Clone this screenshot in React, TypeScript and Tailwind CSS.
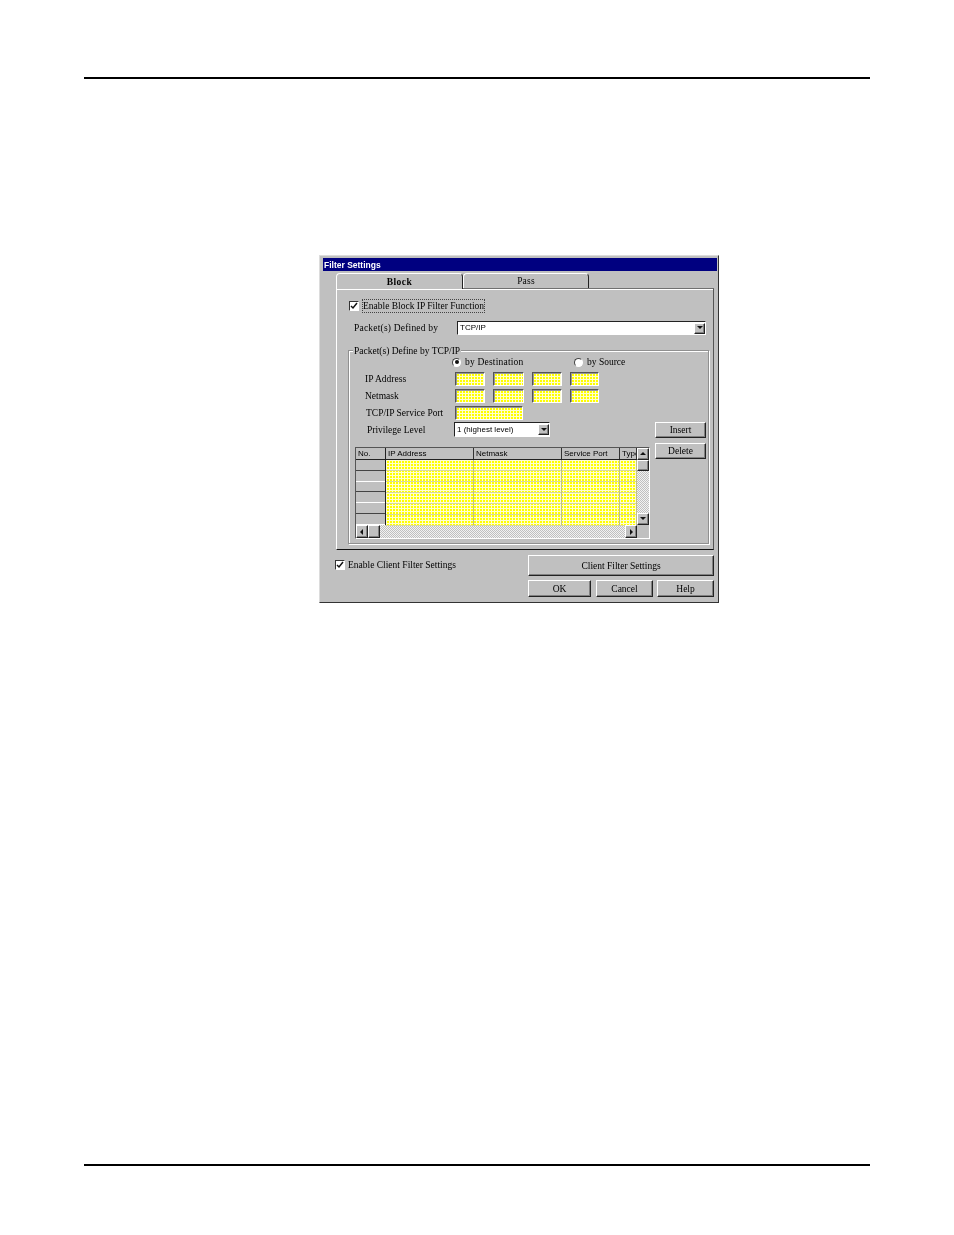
import type { ReactNode } from "react";

const serif = "font-['Liberation_Serif',serif] text-[9.5px] leading-[12px] text-black whitespace-nowrap";
const sans = "font-['Liberation_Sans',sans-serif] text-[8px] leading-[12px] text-black whitespace-nowrap";
const raised = "border border-t-white border-l-white border-r-[#222] border-b-[#222] bg-[#c0c0c0] shadow-[inset_-1px_-1px_0_#808080]";
const sunken = "border border-t-[#555] border-l-[#555] border-r-white border-b-white";
const yellow = "bg-[#ffff00] bg-[linear-gradient(90deg,#fffed0_1px,transparent_1px),linear-gradient(#fffed0_1px,transparent_1px)] bg-[size:3px_3px]";
const hatch = "bg-[repeating-conic-gradient(#c0c0c0_0_25%,#f2f2f2_0_50%)] bg-[size:2px_2px]";

const Arrow = ({ dir }: { dir: "up" | "down" | "left" | "right" }) => {
  const points = { up: "1,5 7,5 4,2", down: "1,2 7,2 4,5", left: "5,1 5,7 2,4", right: "3,1 3,7 6,4" }[dir];
  return (
    <svg width="8" height="8" viewBox="0 0 8 8">
      <polygon points={points} fill="#111" />
    </svg>
  );
};

const Check = () => (
  <span className="flex h-[10px] w-[10px] shrink-0 items-center justify-center border border-t-[#333] border-l-[#333] border-r-white border-b-white bg-white">
    <svg width="8" height="8" viewBox="0 0 8 8">
      <path d="M1 4 L3 6 L7 1" fill="none" stroke="#111" strokeWidth="1.5" />
    </svg>
  </span>
);

const Radio = ({ on }: { on?: boolean }) => (
  <span className="flex h-[9px] w-[9px] shrink-0 items-center justify-center rounded-full border border-t-[#444] border-l-[#444] border-r-white border-b-white bg-white">
    {on && <span className="h-[4px] w-[4px] rounded-full bg-[#111]" />}
  </span>
);

const Btn = ({ w, h, bold, children }: { w: string; h: string; bold?: boolean; children: ReactNode }) => (
  <div className={`flex items-center justify-center ${w} ${h} ${serif} ${raised} ${bold ? "border-[#111] border-t-[#111] border-l-[#111]" : ""}`}>
    {children}
  </div>
);

const Field = ({ w }: { w: string }) => (
  <div className={`h-[14px] ${w} ${yellow} ${sunken} shadow-[inset_1px_1px_0_#999]`} />
);

const DropBtn = () => (
  <div className={`flex h-[11px] w-[11px] items-center justify-center ${raised}`}>
    <Arrow dir="down" />
  </div>
);

const IpRow = ({ label, mt }: { label: string; mt: string }) => (
  <div className={`flex items-center ${mt}`}>
    <span className={`w-[106px] pl-[16px] ${serif}`}>{label}</span>
    <div className="flex gap-[8px]">
      <Field w="w-[30px]" />
      <Field w="w-[31px]" />
      <Field w="w-[30px]" />
      <Field w="w-[29px]" />
    </div>
  </div>
);

const cols = [
  { name: "IP Address", w: "w-[88px]" },
  { name: "Netmask", w: "w-[88px]" },
  { name: "Service Port", w: "w-[58px]" },
  { name: "Type", w: "w-[17px]" },
];

const GridTable = () => (
  <div className={`w-[295px] ${sunken} border-t-[#222] border-l-[#222] bg-[#c0c0c0]`}>
    <div className="flex">
      <div className="w-[281px]">
        <div className="flex h-[12px] border-b border-[#222] bg-[#c0c0c0]">
          <div className={`w-[30px] border-r border-[#222] pl-[2px] ${sans}`}>No.</div>
          {cols.map((c) => (
            <div key={c.name} className={`${c.w} overflow-hidden border-r border-[#333] pl-[2px] ${sans}`}>
              {c.name}
            </div>
          ))}
        </div>
        <div className="flex h-[65px]">
          <div className="flex w-[30px] flex-col border-r border-[#222]">
            {[0, 1, 2, 3, 4, 5].map((i) => (
              <div key={i} className={`h-[11px] border-b ${i % 2 ? "border-white" : "border-[#444]"}`} />
            ))}
          </div>
          <div className={`flex flex-1 ${yellow}`}>
            {cols.map((c) => (
              <div key={c.name} className={`${c.w} shrink-0 border-r border-[#c0c088]`}>
                {[0, 1, 2, 3, 4, 5].map((i) => (
                  <div key={i} className="h-[11px] border-b border-[#d8d8a0]" />
                ))}
              </div>
            ))}
          </div>
        </div>
      </div>
      <div className={`flex w-[12px] flex-col ${hatch}`}>
        <div className={`flex h-[12px] items-center justify-center ${raised}`}>
          <Arrow dir="up" />
        </div>
        <div className={`h-[11px] ${raised}`} />
        <div className="flex-1" />
        <div className={`flex h-[12px] items-center justify-center ${raised}`}>
          <Arrow dir="down" />
        </div>
      </div>
    </div>
    <div className={`flex h-[13px] w-[281px] ${hatch}`}>
      <div className={`flex w-[12px] items-center justify-center ${raised}`}>
        <Arrow dir="left" />
      </div>
      <div className={`w-[12px] ${raised}`} />
      <div className="flex-1" />
      <div className={`flex w-[12px] items-center justify-center ${raised}`}>
        <Arrow dir="right" />
      </div>
    </div>
  </div>
);

export default function App() {
  return (
    <div className="flex h-[1235px] flex-col bg-white pt-[77px]">
      <div className="mx-[84px] h-[2px] bg-black" />

      {/* the scan is soft, so the dialog gets a slight blur */}
      <div className="ml-[319px] mt-[176px] h-[348px] w-[400px] border border-t-[#dcdcdc] border-l-[#dcdcdc] border-r-[#333] border-b-[#333] bg-[#c0c0c0] pl-[3px] pr-[1px] pt-[2px] blur-[0.3px]">
        <div className="flex h-[13px] items-center bg-[#000080] pl-[1px] pt-[1px] font-['Liberation_Sans',sans-serif] text-[8.5px] font-bold text-white">
          Filter Settings
        </div>

        {/* tabs */}
        <div className="ml-[13px] mt-[2px] flex h-[15px]">
          <div className={`relative z-10 flex h-[16px] w-[127px] items-center justify-center rounded-t-[4px] border-x border-t border-t-white border-l-white border-r-[#222] bg-[#c0c0c0] font-bold tracking-[0.5px] ${serif}`}>
            Block
          </div>
          <div className={`flex w-[126px] items-center justify-center rounded-t-[4px] border-x border-t border-t-white border-l-white border-r-[#222] bg-[#c0c0c0] tracking-[0.2px] ${serif}`}>
            Pass
          </div>
        </div>

        {/* panel */}
        <div className="ml-[13px] h-[262px] w-[378px] border border-t-[#707070] border-l-white border-r-[#555] border-b-[#111] pl-[12px] pt-[10px] shadow-[inset_0_1px_0_#fff]">
          <div className="flex items-center gap-[3px]">
            <Check />
            <span className={`border border-dotted border-[#444] ${serif}`}>Enable Block IP Filter Function</span>
          </div>

          <div className="ml-[5px] mt-[8px] flex items-center">
            <span className={`w-[103px] tracking-[0.2px] ${serif}`}>Packet(s) Defined by</span>
            <div className={`flex h-[14px] w-[249px] items-center justify-between border border-t-[#222] border-l-[#222] border-r-white border-b-white bg-white pl-[2px] ${sans}`}>
              TCP/IP
              <DropBtn />
            </div>
          </div>

          {/* group box */}
          <div className="relative -ml-[1px] mt-[15px] h-[194px] w-[361px] border border-[#909090] shadow-[1px_1px_0_#fff,inset_1px_1px_0_#fff]">
            <span className={`absolute -top-[6px] left-[4px] bg-[#c0c0c0] px-[1px] ${serif}`}>Packet(s) Define by TCP/IP</span>

            <div className="ml-[103px] mt-[5px] flex h-[12px]">
              <div className="flex w-[122px] items-center gap-[4px]">
                <Radio on />
                <span className={`tracking-[0.2px] ${serif}`}>by Destination</span>
              </div>
              <div className="flex items-center gap-[4px]">
                <Radio />
                <span className={serif}>by Source</span>
              </div>
            </div>

            <IpRow label="IP Address" mt="mt-[4px]" />
            <IpRow label="Netmask" mt="mt-[3px]" />

            <div className="mt-[3px] flex items-center">
              <span className={`w-[106px] pl-[17px] ${serif}`}>TCP/IP Service Port</span>
              <Field w="w-[68px]" />
            </div>

            <div className="mt-[2px] flex h-[38px]">
              <div className="w-[306px]">
                <div className="flex items-center">
                  <span className={`w-[105px] pl-[18px] ${serif}`}>Privilege Level</span>
                  <div className={`flex h-[15px] w-[96px] items-center justify-between border border-t-[#222] border-l-[#222] border-r-white border-b-white bg-white pl-[2px] ${sans}`}>
                    1 (highest level)
                    <DropBtn />
                  </div>
                </div>
              </div>
              <div className="flex flex-col gap-[5px]">
                <Btn w="w-[51px]" h="h-[16px]">Insert</Btn>
                <Btn w="w-[51px]" h="h-[16px]">Delete</Btn>
              </div>
            </div>

            <div className="-mt-[13px] ml-[6px]">
              <GridTable />
            </div>
          </div>
        </div>

        {/* bottom */}
        <div className="ml-[12px] mt-[5px] flex w-[379px] justify-between">
          <div className="flex h-[20px] items-center gap-[3px]">
            <Check />
            <span className={serif}>Enable Client Filter Settings</span>
          </div>
          <Btn w="w-[186px]" h="h-[21px]">Client Filter Settings</Btn>
        </div>
        <div className="ml-[205px] mt-[4px] flex">
          <Btn w="w-[63px]" h="h-[17px]" bold>OK</Btn>
          <div className="ml-[5px]">
            <Btn w="w-[57px]" h="h-[17px]">Cancel</Btn>
          </div>
          <div className="ml-[4px]">
            <Btn w="w-[57px]" h="h-[17px]">Help</Btn>
          </div>
        </div>
      </div>

      <div className="mx-[84px] mt-[561px] h-[2px] bg-black" />
    </div>
  );
}
